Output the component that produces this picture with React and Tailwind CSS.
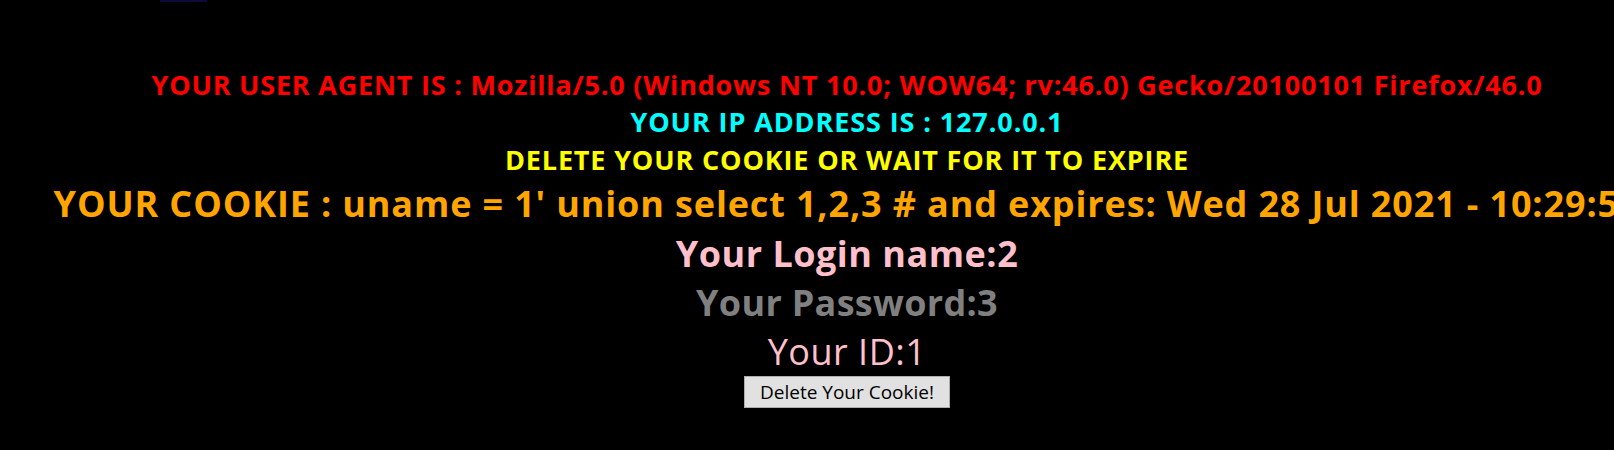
import React from "react";

const lines = {
    agent: "YOUR USER AGENT IS : Mozilla/5.0 (Windows NT 10.0; WOW64; rv:46.0) Gecko/20100101 Firefox/46.0",
    ip: "YOUR IP ADDRESS IS : 127.0.0.1",
    cookie: "YOUR COOKIE : uname = 1' union select 1,2,3 # and expires: Wed 28 Jul 2021 - 10:29:57",
};

export default function App() {
    return (
        <div className="min-h-[450px] w-full overflow-hidden bg-black font-['Open_Sans',sans-serif]">
            {/* leftover strip at the very top */}
            <div className="ml-[160px] h-[2px] w-[47px] bg-[#0b0b3b]"></div>

            <div className="pl-[80px] pt-[64px] text-center">
                <div className="text-[27px] font-bold leading-[37px] tracking-[0.8px] text-[#ff0000] whitespace-nowrap">{lines.agent}</div>
                <div className="text-[27px] font-bold leading-[38px] tracking-[0.9px] text-[#00ffff]">{lines.ip}</div>
                <div className="text-[27px] font-bold leading-[38px] tracking-[0.85px] text-[#ffff00]">DELETE YOUR COOKIE OR WAIT FOR IT TO EXPIRE</div>

                <div className="flex justify-center">
                    <div className="shrink-0 whitespace-nowrap text-[36px] font-bold leading-[50px] tracking-[0.86px] text-[#ffa500]">{lines.cookie}</div>
                </div>

                <div className="text-[36px] font-bold leading-[49px] tracking-[0.5px] text-[#ffc0cb]">Your Login name:2</div>
                <div className="text-[36px] font-bold leading-[49px] tracking-[0.3px] text-[#808080]">Your Password:3</div>
                <div className="text-[36px] leading-[49px] tracking-[0.5px] text-[#ffc0cb]">Your ID:1</div>

                <button className="h-[32px] w-[206px] border border-[#adadad] bg-[#e1e1e1] text-[19px] leading-none text-black">
                    Delete Your Cookie!
                </button>
            </div>
        </div>
    );
}
